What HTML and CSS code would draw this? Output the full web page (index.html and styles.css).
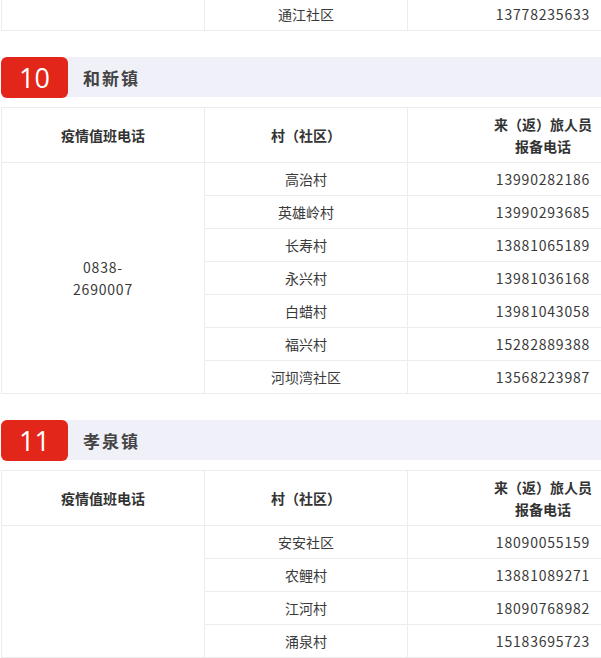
FILE: index.html
```html
<!DOCTYPE html>
<html lang="zh">
<head>
<meta charset="utf-8">
<link rel="stylesheet" href="styles.css">
</head>
<body>
<div class="page">
  <table class="tbl tbl-top">
    <colgroup><col class="c1"><col class="c2"><col class="c3"></colgroup>
    <tr><td></td><td>通江社区</td><td class="num">13778235633</td></tr>
  </table>

  <div class="sec">
    <div class="badge">10</div>
    <div class="sec-title">和新镇</div>
  </div>
  <table class="tbl">
    <colgroup><col class="c1"><col class="c2"><col class="c3"></colgroup>
    <tr class="head"><th>疫情值班电话</th><th>村（社区）</th><th>来（返）旅人员<br>报备电话</th></tr>
    <tr><td rowspan="7" class="num">0838-<br>2690007</td><td>高治村</td><td class="num">13990282186</td></tr>
    <tr><td>英雄岭村</td><td class="num">13990293685</td></tr>
    <tr><td>长寿村</td><td class="num">13881065189</td></tr>
    <tr><td>永兴村</td><td class="num">13981036168</td></tr>
    <tr><td>白蜡村</td><td class="num">13981043058</td></tr>
    <tr><td>福兴村</td><td class="num">15282889388</td></tr>
    <tr><td>河坝湾社区</td><td class="num">13568223987</td></tr>
  </table>

  <div class="sec">
    <div class="badge">11</div>
    <div class="sec-title">孝泉镇</div>
  </div>
  <table class="tbl">
    <colgroup><col class="c1"><col class="c2"><col class="c3"></colgroup>
    <tr class="head"><th>疫情值班电话</th><th>村（社区）</th><th>来（返）旅人员<br>报备电话</th></tr>
    <tr><td rowspan="4"></td><td>安安社区</td><td class="num">18090055159</td></tr>
    <tr><td>农鲤村</td><td class="num">13881089271</td></tr>
    <tr><td>江河村</td><td class="num">18090768982</td></tr>
    <tr><td>涌泉村</td><td class="num">15183695723</td></tr>
  </table>
</div>
</body>
</html>
```
FILE: styles.css
```css
html, body {
  margin: 0;
  padding: 0;
  background: #fff;
}
body {
  font-family: "Noto Sans CJK SC", "Noto Sans", sans-serif;
  color: #333;
  font-size: 14px;
}
.page {
  padding-left: 1px;
  width: 600px;
  height: 658px;
  overflow: hidden;
}
.tbl {
  border-collapse: collapse;
  width: 677px;
  table-layout: fixed;
}
.tbl-top {
  margin-top: -3px;
}
.c1 { width: 203px; }
.c2 { width: 203px; }
.c3 { width: 271px; }
.tbl td, .tbl th {
  border: 1px solid #ececec;
  padding: 5px 8px;
  line-height: 22px;
  text-align: center;
  vertical-align: middle;
  color: #3a3a3a;
  font-weight: normal;
}
.tbl th {
  font-weight: bold;
  color: #333;
}
.num {
  letter-spacing: 0.8px;
}
.sec {
  display: flex;
  align-items: center;
  height: 41px;
  margin: 26px 0 9px;
  width: 600px;
  background: linear-gradient(to right, transparent 0, transparent 60px, #eff0f8 60px);
  background-size: 100% 40px;
  background-repeat: no-repeat;
}
.badge {
  width: 67px;
  height: 41px;
  background: #e2261a;
  border-radius: 6px;
  color: #fff;
  font-family: "Open Sans", "Noto Sans", sans-serif;
  font-size: 27px;
  line-height: 41px;
  text-align: center;
}
.sec-title {
  margin-left: 15px;
  font-size: 17px;
  font-weight: bold;
  letter-spacing: 2px;
  color: #444;
}
```
